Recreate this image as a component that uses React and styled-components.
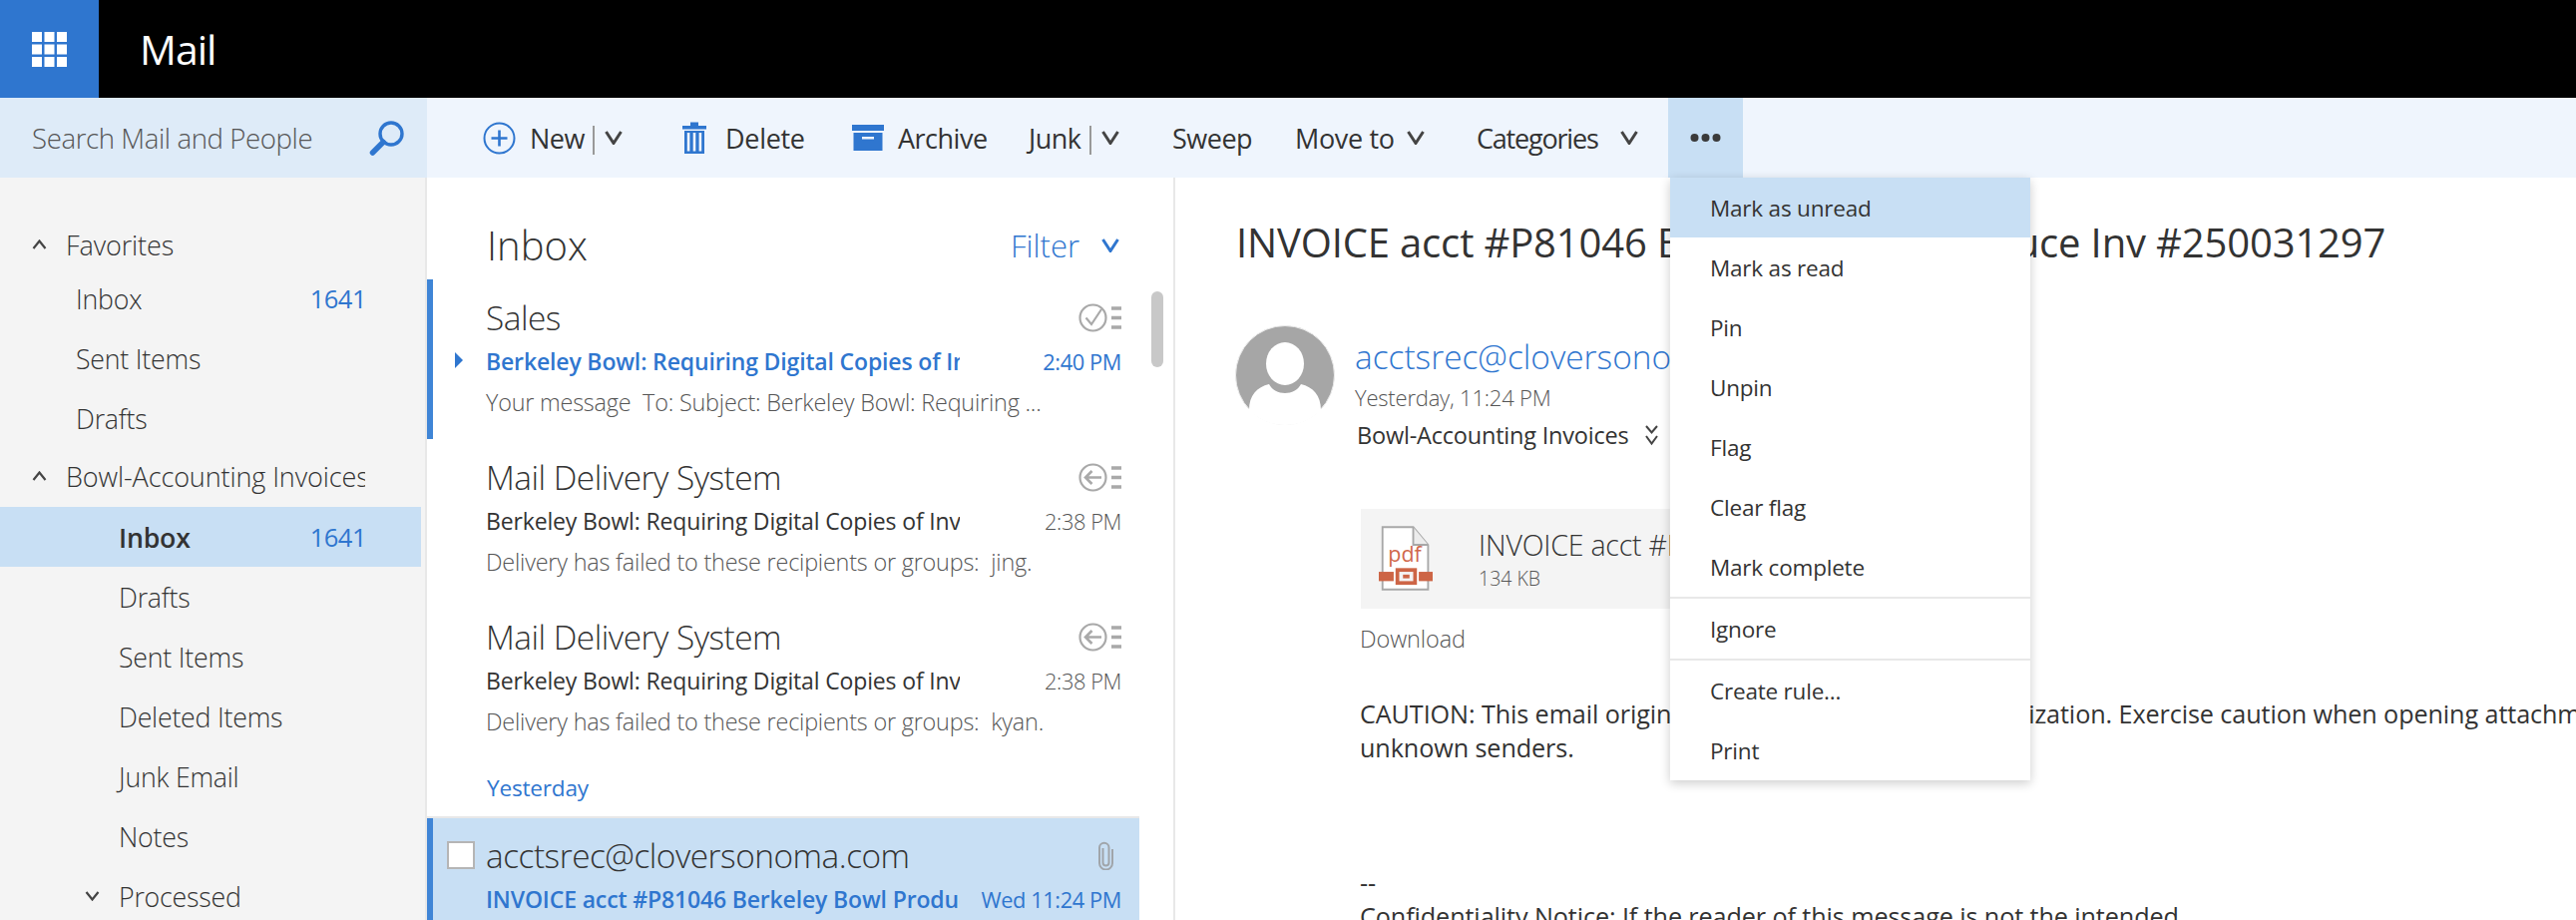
import styled, { createGlobalStyle } from "styled-components";

const GlobalStyle = createGlobalStyle`
  html, body {
    margin: 0;
    padding: 0;
    background: #fff;
  }
  * {
    box-sizing: border-box;
  }
`;

const BLUE = "#2f76cf";
const SELECTED = "#c8dff4";

const Page = styled.div`
  width: 2582px;
  height: 922px;
  overflow: hidden;
  display: flex;
  flex-direction: column;
  font-family: "Open Sans", "Noto Sans", sans-serif;
  color: #333;
`;

/* top black bar */
const TopBar = styled.header`
  height: 98px;
  flex: none;
  background: #000;
  display: flex;
  align-items: center;
`;

const Waffle = styled.div`
  width: 99px;
  height: 98px;
  background: ${BLUE};
  display: flex;
  align-items: center;
  justify-content: center;
`;

const AppName = styled.div`
  margin-left: 41px;
  color: #fff;
  font-size: 41px;
  font-weight: 400;
  letter-spacing: -1px;
`;

const CommandRow = styled.div`
  height: 80px;
  flex: none;
  display: flex;
`;

const SearchBox = styled.div`
  width: 428px;
  flex: none;
  background: #deebf8;
  display: flex;
  align-items: center;
  justify-content: space-between;
  padding: 0 22px 0 32px;
  font-size: 27.6px;
  font-weight: 300;
  color: #555;
  letter-spacing: -0.4px;
`;

const Toolbar = styled.div`
  flex: 1;
  background: #eff5fd;
  display: flex;
  align-items: center;
  padding-left: 56px;
  font-size: 27px;
  font-weight: 400;
  color: #333;
`;

const ToolButton = styled.div`
  display: flex;
  align-items: center;
  width: ${(p) => p.$w}px;
  flex: none;
  gap: ${(p) => p.$gap || 0}px;
  letter-spacing: ${(p) => p.$ls ?? -0.5}px;
`;

const SplitLabel = styled.span`
  display: flex;
  align-items: center;
`;

const Split = styled.span`
  width: 2px;
  height: 29px;
  background: #999;
  margin: 4px 10px 0 8px;
  flex: none;
`;

const MoreWrap = styled.div`
  position: relative;
  width: 75px;
  height: 80px;
  flex: none;
  background: ${SELECTED};
  display: flex;
  align-items: center;
  justify-content: center;
`;

const Menu = styled.div`
  position: absolute;
  top: 80px;
  left: 2px;
  width: 361px;
  background: #fff;
  box-shadow: 0 3px 10px rgba(0, 0, 0, 0.2);
  z-index: 5;
`;

const MenuItem = styled.div`
  height: 60px;
  display: flex;
  align-items: center;
  padding-left: 40px;
  font-size: 22.5px;
  font-weight: 400;
  letter-spacing: -0.2px;
  color: #333;
  background: ${(p) => (p.$active ? SELECTED : "transparent")};
`;

const MenuLine = styled.div`
  height: 2px;
  background: #e8e8e8;
`;

const Content = styled.div`
  flex: 1;
  min-height: 0;
  display: flex;
`;

/* folders */
const FolderPane = styled.nav`
  width: 428px;
  flex: none;
  background: #f4f4f4;
  border-right: 2px solid #e8e8e8;
  padding-top: 43px;
  overflow: hidden;
`;

const GroupHead = styled.div`
  height: ${(p) => p.$h}px;
  padding-bottom: ${(p) => p.$pb || 0}px;
  display: flex;
  align-items: center;
  padding-left: 32px;
  font-size: 27px;
  font-weight: 300;
  letter-spacing: -0.1px;
  color: #333;
`;

const GroupName = styled.span`
  margin-left: 19px;
  width: 300px;
  overflow: hidden;
  white-space: nowrap;
`;

const FolderRow = styled.div`
  height: 60px;
  width: 422px;
  display: flex;
  align-items: center;
  justify-content: space-between;
  padding: 0 55px 0 ${(p) => p.$indent}px;
  font-size: 26.7px;
  font-weight: ${(p) => (p.$active ? 600 : 300)};
  letter-spacing: -0.2px;
  color: #333;
  background: ${(p) => (p.$active ? SELECTED : "transparent")};
`;

const FolderLabel = styled.span`
  display: flex;
  align-items: center;
  gap: 19px;
`;

const Count = styled.span`
  color: ${BLUE};
  font-size: 25.5px;
  font-weight: 400;
  letter-spacing: -0.5px;
`;

/* message list */
const ListPane = styled.section`
  position: relative;
  width: 750px;
  flex: none;
  border-right: 2px solid #e8e8e8;
  overflow: hidden;
`;

const ListHead = styled.div`
  height: 102px;
  width: 714px;
  display: flex;
  align-items: center;
  justify-content: space-between;
  padding: 33px 20px 0 60px;
`;

const ListTitle = styled.h1`
  margin: 0;
  font-size: 40px;
  font-weight: 300;
  color: #333;
`;

const FilterButton = styled.div`
  display: flex;
  align-items: center;
  gap: 22px;
  font-size: 31px;
  font-weight: 300;
  color: ${BLUE};
`;

const Scrollbar = styled.div`
  position: absolute;
  left: 726px;
  top: 114px;
  width: 12px;
  height: 76px;
  border-radius: 6px;
  background: #c8c8c8;
`;

const MessageItem = styled.article`
  position: relative;
  width: 714px;
  height: 160px;
  padding: 18px 18px 0 53px;
  border-left: 6px solid ${(p) => (p.$accent ? "#3f85d6" : "transparent")};
  background: ${(p) => (p.$selected ? SELECTED : "transparent")};
`;

const Line = styled.div`
  display: flex;
  align-items: center;
  justify-content: space-between;
  height: ${(p) => p.$h}px;
`;

const Sender = styled.div`
  font-size: 33.4px;
  font-weight: 300;
  letter-spacing: -0.5px;
  color: #333;
  white-space: nowrap;
`;

const Subject = styled.div`
  width: 475px;
  overflow: hidden;
  white-space: nowrap;
  font-size: 23px;
  letter-spacing: -0.15px;
  font-weight: ${(p) => (p.$unread ? 600 : 400)};
  color: ${(p) => (p.$unread ? BLUE : "#333")};
`;

const Time = styled.div`
  font-size: 21.8px;
  letter-spacing: -0.4px;
  white-space: nowrap;
  font-weight: ${(p) => (p.$unread ? 500 : 300)};
  color: ${(p) => (p.$unread ? BLUE : "#555")};
`;

const Preview = styled.div`
  font-size: 23.4px;
  font-weight: 300;
  letter-spacing: -0.2px;
  color: #555;
  white-space: nowrap;
`;

const UnreadArrow = styled.span`
  position: absolute;
  left: 22px;
  top: 73px;
  width: 0;
  height: 0;
  border-left: 8px solid ${BLUE};
  border-top: 8px solid transparent;
  border-bottom: 8px solid transparent;
`;

const Checkbox = styled.span`
  position: absolute;
  left: 14px;
  top: 23px;
  width: 28px;
  height: 28px;
  background: #fff;
  border: 2px solid #b5b5b5;
`;

const ClipSlot = styled.span`
  display: flex;
  margin-right: 7px;
`;

const DayHead = styled.div`
  width: 714px;
  height: 60px;
  padding: 0 0 0 60px;
  display: flex;
  align-items: center;
  font-size: 22.6px;
  font-weight: 500;
  letter-spacing: -0.2px;
  color: ${BLUE};
  border-bottom: 2px solid #e8e8e8;
`;

/* reading pane */
const ReadingPane = styled.main`
  flex: 1;
  min-width: 0;
  padding: 35px 0 0 61px;
  overflow: hidden;
`;

const MailTitle = styled.h2`
  margin: 0;
  height: 60px;
  line-height: 60px;
  font-size: 40px;
  font-weight: 400;
  letter-spacing: -0.15px;
  color: #333;
  white-space: nowrap;
`;

const MailHeader = styled.div`
  margin: 53px 0 0 -1px;
  display: flex;
  height: 132px;
`;

const HeaderText = styled.div`
  margin-left: 20px;
  padding-top: 8px;
`;

const FromName = styled.div`
  height: 46px;
  line-height: 46px;
  font-size: 33.4px;
  font-weight: 300;
  color: ${BLUE};
`;

const MailDate = styled.div`
  height: 36px;
  line-height: 36px;
  font-size: 22px;
  font-weight: 300;
  letter-spacing: -0.2px;
  color: #555;
`;

const FolderTag = styled.div`
  height: 40px;
  display: flex;
  align-items: center;
  gap: 15px;
  padding-left: 2px;
  font-size: 23.5px;
  letter-spacing: -0.2px;
  color: #333;
`;

const Attachment = styled.div`
  margin: 52px 0 0 125px;
  width: 600px;
  height: 100px;
  background: #f4f4f4;
  display: flex;
  align-items: center;
  padding-left: 18px;
  overflow: hidden;
`;

const AttachText = styled.div`
  margin-left: 46px;
  min-width: 0;
`;

const AttachName = styled.div`
  font-size: 28.5px;
  letter-spacing: -0.2px;
  font-weight: 300;
  white-space: nowrap;
  color: #333;
`;

const AttachSize = styled.div`
  margin-top: 1px;
  font-size: 19.5px;
  font-weight: 300;
  color: #555;
`;

const BodyText = styled.div`
  margin-left: 124px;
  font-size: 25.2px;
  line-height: 34.4px;
  font-weight: 400;
  letter-spacing: -0.1px;
  white-space: nowrap;
  color: #333;
`;

const Download = styled(BodyText)`
  margin-top: 10px;
  line-height: 40px;
  font-size: 23.5px;
  font-weight: 300;
  color: #555;
`;

const Caution = styled(BodyText)`
  margin-top: 38px;
`;

const Signature = styled(BodyText)`
  margin-top: 100px;
`;

const WaffleIcon = () => (
  <svg width="35" height="35" viewBox="0 0 35 35" fill="#fff">
    {[0, 12.5, 25].map((y) =>
      [0, 12.5, 25].map((x) => <rect key={`${x}-${y}`} x={x} y={y} width="10" height="10" />)
    )}
  </svg>
);

const SearchIcon = () => (
  <svg width="36" height="36" viewBox="0 0 36 36" fill="none" stroke={BLUE}>
    <circle cx="22" cy="14" r="11" strokeWidth="3.4" />
    <path d="M14 22.5 L3.5 33" strokeWidth="5.5" strokeLinecap="round" />
  </svg>
);

const PlusIcon = () => (
  <svg width="33" height="33" viewBox="0 0 33 33" fill="none" stroke={BLUE} strokeWidth="2">
    <circle cx="16.5" cy="16.5" r="15" />
    <path d="M16.5 8.5 V24.5 M8.5 16.5 H24.5" strokeWidth="2.6" />
  </svg>
);

const TrashIcon = () => (
  <svg width="24" height="32" viewBox="0 0 24 32" fill={BLUE}>
    <rect x="0" y="4" width="24" height="3.5" />
    <rect x="8" y="0.5" width="8" height="4" />
    <path d="M2 9 H22 V32 H2 Z M4.8 11 V29.6 H7.4 V11 Z M10.7 11 V29.6 H13.3 V11 Z M16.6 11 V29.6 H19.2 V11 Z" fillRule="evenodd" />
  </svg>
);

const ArchiveIcon = () => (
  <svg width="32" height="26" viewBox="0 0 32 26" fill={BLUE}>
    <rect x="0" y="0" width="32" height="6" />
    <path d="M1.5 8 H30.5 V26 H1.5 Z M10 12 V14.5 H22 V12 Z" fillRule="evenodd" />
  </svg>
);

const Chevron = ({ w = 18, h = 14, color = "#444", sw = 3, dir = "down" }) => (
  <svg width={w} height={h} viewBox={`0 0 ${w} ${h}`} fill="none" stroke={color} strokeWidth={sw}>
    {dir === "down" ? (
      <path d={`M1.5 1 L${w / 2} ${h - 1.5} L${w - 1.5} 1`} />
    ) : (
      <path d={`M1.5 ${h - 1} L${w / 2} 1.5 L${w - 1.5} ${h - 1}`} />
    )}
  </svg>
);

const DoubleChevron = () => (
  <svg width="15" height="21" viewBox="0 0 15 21" fill="none" stroke="#444" strokeWidth="2">
    <path d="M2 1 L7.5 7.5 L13 1" />
    <path d="M2 11 L7.5 18.5 L13 11" />
  </svg>
);

const Dots = () => (
  <svg width="31" height="10" viewBox="0 0 31 10" fill="#3a3a3a">
    <circle cx="4.5" cy="5" r="4" />
    <circle cx="15.5" cy="5" r="4" />
    <circle cx="26.5" cy="5" r="4" />
  </svg>
);

const ActionIcon = ({ kind }) => (
  <svg width="43" height="29" viewBox="0 0 43 29" fill="none" stroke="#a9a9a9" strokeWidth="2.2">
    <circle cx="14.5" cy="14.5" r="13" />
    {kind === "check" ? (
      <path d="M7.5 14.5 L13 21 L23 6" />
    ) : (
      <path d="M23 14.5 H7.5 M13.5 8 L7 14.5 L13.5 21" strokeWidth="2.6" />
    )}
    <path d="M33 5 H43 M33 14.5 H43 M33 24 H43" strokeWidth="3.4" />
  </svg>
);

const PaperClip = () => (
  <svg width="17" height="29" viewBox="0 0 17 29" fill="none" stroke="#a0a5aa" strokeWidth="2">
    <path d="M5.5 7 V21.5 A3 3 0 0 0 11.5 21.5 V6.5 A4.7 4.7 0 0 0 2 6.5 V22 A6.5 6.5 0 0 0 15 22 V8" />
  </svg>
);

const Avatar = () => (
  <svg width="100" height="100" viewBox="0 0 100 100">
    <circle cx="50" cy="50" r="49.5" fill="#a6a6a6" stroke="#ececec" strokeWidth="1" />
    <ellipse cx="50" cy="38.5" rx="19" ry="21.5" fill="#fff" />
    <path d="M14 85 C14 70 22 62 34 59 C40 71 60 71 66 59 C78 62 86 70 86 85 C76 95 64 100 50 100 C36 100 24 95 14 85 Z" fill="#fff" />
  </svg>
);

const PdfIcon = () => (
  <svg width="58" height="70" viewBox="0 0 58 70">
    <path d="M4 1 H37 L53 20 V68 H4 Z" fill="#fff" stroke="#a8a8a8" strokeWidth="2" />
    <path d="M37 1 V20 H53" fill="#ececec" stroke="#a8a8a8" strokeWidth="2" />
    <text x="10" y="38" fontFamily="Open Sans, sans-serif" fontSize="23" fill="#d0674a">pdf</text>
    <rect x="0" y="49" width="16" height="10" fill="#cd6546" />
    <rect x="43" y="49" width="15" height="10" fill="#cd6546" />
    <rect x="18" y="45" width="23" height="18" fill="#cd6546" />
    <rect x="22" y="49" width="15" height="10" fill="#f4f4f4" />
    <rect x="26" y="52" width="7" height="4" fill="#cd6546" />
  </svg>
);

const menuTop = ["Mark as unread", "Mark as read", "Pin", "Unpin", "Flag", "Clear flag", "Mark complete"];

const deliveries = ["jing.", "kyan."];

export default function App() {
  return (
    <Page>
      <GlobalStyle />
      <TopBar>
        <Waffle>
          <WaffleIcon />
        </Waffle>
        <AppName>Mail</AppName>
      </TopBar>

      <CommandRow>
        <SearchBox>
          Search Mail and People
          <SearchIcon />
        </SearchBox>
        <Toolbar>
          <ToolButton $w={200} $gap={14}>
            <PlusIcon />
            <SplitLabel>
              New
              <Split />
              <Chevron />
            </SplitLabel>
          </ToolButton>
          <ToolButton $w={170} $gap={19} $ls={-0.3}>
            <TrashIcon />
            Delete
          </ToolButton>
          <ToolButton $w={177} $gap={14}>
            <ArchiveIcon />
            Archive
          </ToolButton>
          <ToolButton $w={144}>
            Junk
            <Split />
            <Chevron />
          </ToolButton>
          <ToolButton $w={123}>Sweep</ToolButton>
          <ToolButton $w={182} $gap={12} $ls={-0.35}>
            Move to
            <Chevron />
          </ToolButton>
          <ToolButton $w={192} $gap={22} $ls={-1.2}>
            Categories
            <Chevron />
          </ToolButton>
          <MoreWrap>
            <Dots />
            <Menu>
              {menuTop.map((label, i) => (
                <MenuItem key={label} $active={i === 0}>
                  {label}
                </MenuItem>
              ))}
              <MenuLine />
              <MenuItem>Ignore</MenuItem>
              <MenuLine />
              <MenuItem>Create rule...</MenuItem>
              <MenuItem>Print</MenuItem>
            </Menu>
          </MoreWrap>
        </Toolbar>
      </CommandRow>

      <Content>
        <FolderPane>
          <GroupHead $h={48}>
            <Chevron w={15} h={10} sw={2.2} dir="up" />
            <GroupName>Favorites</GroupName>
          </GroupHead>
          <FolderRow $indent={76}>
            Inbox
            <Count>1641</Count>
          </FolderRow>
          <FolderRow $indent={76}>Sent Items</FolderRow>
          <FolderRow $indent={76}>Drafts</FolderRow>
          <GroupHead $h={59} $pb={3}>
            <Chevron w={15} h={10} sw={2.2} dir="up" />
            <GroupName>Bowl-Accounting Invoices</GroupName>
          </GroupHead>
          <FolderRow $indent={119} $active>
            Inbox
            <Count>1641</Count>
          </FolderRow>
          <FolderRow $indent={119}>Drafts</FolderRow>
          <FolderRow $indent={119}>Sent Items</FolderRow>
          <FolderRow $indent={119}>Deleted Items</FolderRow>
          <FolderRow $indent={119}>Junk Email</FolderRow>
          <FolderRow $indent={119}>Notes</FolderRow>
          <FolderRow $indent={85}>
            <FolderLabel>
              <Chevron w={15} h={10} sw={2.2} />
              Processed
            </FolderLabel>
          </FolderRow>
        </FolderPane>

        <ListPane>
          <ListHead>
            <ListTitle>Inbox</ListTitle>
            <FilterButton>
              Filter
              <Chevron color={BLUE} />
            </FilterButton>
          </ListHead>
          <Scrollbar />

          <MessageItem $accent>
            <UnreadArrow />
            <Line $h={40}>
              <Sender>Sales</Sender>
              <ActionIcon kind="check" />
            </Line>
            <Line $h={48}>
              <Subject $unread>Berkeley Bowl: Requiring Digital Copies of Invoices</Subject>
              <Time $unread>2:40 PM</Time>
            </Line>
            <Line $h={34}>
              <Preview>Your message&nbsp; To: Subject: Berkeley Bowl: Requiring ...</Preview>
            </Line>
          </MessageItem>

          {deliveries.map((who) => (
            <MessageItem key={who}>
              <Line $h={40}>
                <Sender>Mail Delivery System</Sender>
                <ActionIcon kind="reply" />
              </Line>
              <Line $h={48}>
                <Subject>Berkeley Bowl: Requiring Digital Copies of Invoices</Subject>
                <Time>2:38 PM</Time>
              </Line>
              <Line $h={34}>
                <Preview>Delivery has failed to these recipients or groups:&nbsp; {who}</Preview>
              </Line>
            </MessageItem>
          ))}

          <DayHead>Yesterday</DayHead>

          <MessageItem $accent $selected>
            <Checkbox />
            <Line $h={38}>
              <Sender>acctsrec@cloversonoma.com</Sender>
              <ClipSlot>
                <PaperClip />
              </ClipSlot>
            </Line>
            <Line $h={50}>
              <Subject $unread>INVOICE acct #P81046 Berkeley Bowl Produce Inv #250031297</Subject>
              <Time $unread>Wed 11:24 PM</Time>
            </Line>
          </MessageItem>
        </ListPane>

        <ReadingPane>
          <MailTitle>INVOICE acct #P81046 Berkeley Bowl Produce Inv #250031297</MailTitle>
          <MailHeader>
            <Avatar />
            <HeaderText>
              <FromName>acctsrec@cloversonoma.com</FromName>
              <MailDate>Yesterday, 11:24 PM</MailDate>
              <FolderTag>
                Bowl-Accounting Invoices
                <DoubleChevron />
              </FolderTag>
            </HeaderText>
          </MailHeader>
          <Attachment>
            <PdfIcon />
            <AttachText>
              <AttachName>INVOICE acct #P81046 Berkeley Bowl.pdf</AttachName>
              <AttachSize>134 KB</AttachSize>
            </AttachText>
          </Attachment>
          <Download>Download</Download>
          <Caution>
            CAUTION: This email originated from outside of the organization. Exercise caution when opening attachments from
            <br />
            unknown senders.
          </Caution>
          <Signature>
            --
            <br />
            Confidentiality Notice: If the reader of this message is not the intended
          </Signature>
        </ReadingPane>
      </Content>
    </Page>
  );
}
